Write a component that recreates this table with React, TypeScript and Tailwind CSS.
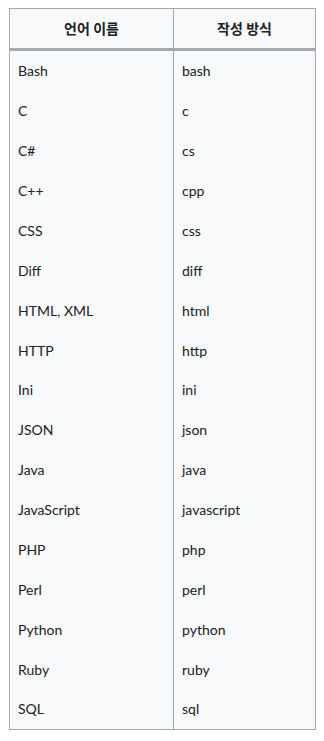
import React from "react";

const rows: [string, string][] = [
  ["Bash", "bash"],
  ["C", "c"],
  ["C#", "cs"],
  ["C++", "cpp"],
  ["CSS", "css"],
  ["Diff", "diff"],
  ["HTML, XML", "html"],
  ["HTTP", "http"],
  ["Ini", "ini"],
  ["JSON", "json"],
  ["Java", "java"],
  ["JavaScript", "javascript"],
  ["PHP", "php"],
  ["Perl", "perl"],
  ["Python", "python"],
  ["Ruby", "ruby"],
  ["SQL", "sql"],
];

const App = () => {
  return (
    <div className="min-h-screen bg-white pt-[8px] pl-[9px] font-['Lato','Noto_Sans_CJK_KR',sans-serif] text-[14px] text-[#202122]">
      <div className="w-[307px] border border-[#a2a9b1] bg-[#f8f9fa]">
        <div className="grid grid-cols-[164px_1fr] border-b-[3px] border-[#a2a9b1]">
          <div className="flex h-[39px] items-center justify-center border-r border-[#a2a9b1] font-bold">
            언어 이름
          </div>
          <div className="flex h-[39px] items-center justify-center font-bold">
            작성 방식
          </div>
        </div>
        {rows.map(([name, code]) => (
          <div key={name} className="grid grid-cols-[164px_1fr]">
            <div className="flex h-[39.88px] items-center border-r border-[#a2a9b1] pl-[8px]">
              {name}
            </div>
            <div className="flex h-[39.88px] items-center pl-[8px]">{code}</div>
          </div>
        ))}
      </div>
    </div>
  );
};

export default App;
